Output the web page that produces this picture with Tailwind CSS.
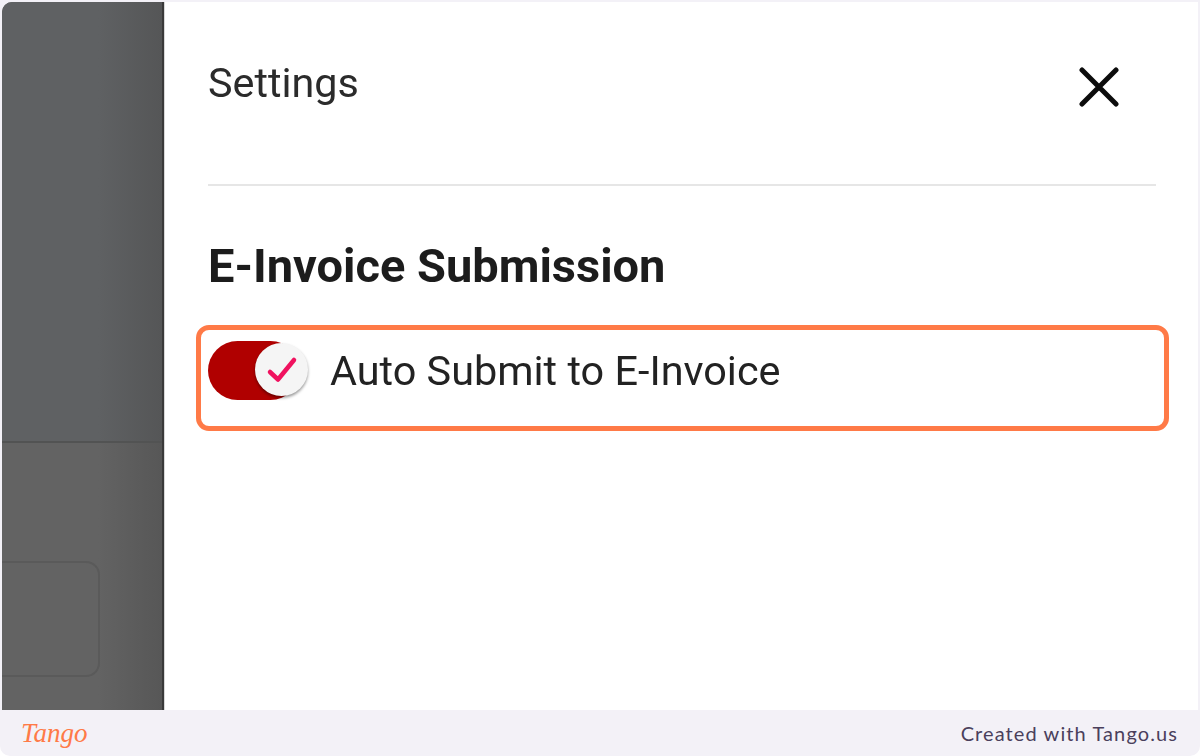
<!DOCTYPE html>
<html lang="en">
<head>
    <meta charset="UTF-8">
    <meta name="viewport" content="width=device-width, initial-scale=1.0">
    <title>Settings</title>
    <script src="https://cdn.jsdelivr.net/npm/@tailwindcss/browser@4"></script>
</head>
<body class="bg-white">
    <div class="w-[1200px] h-[756px] flex flex-col bg-[#f3f1f7] rounded-bl-[10px] rounded-br-[10px] overflow-hidden font-['Roboto',sans-serif]">
        <div class="h-[708px] mt-[2px] mx-[2px] flex bg-white rounded-tl-[10px] overflow-hidden">
            <!-- dimmed page behind the drawer -->
            <div class="w-[162px] shrink-0 flex flex-col border-r-2 border-[#3a3a3a] bg-linear-to-r from-[#636363] from-60% to-[#575757]">
                <div class="h-[441px] shrink-0 border-b-2 border-[#525353] bg-linear-to-r from-[#5f6163] from-60% to-[#555657]"></div>
                <div class="mt-[118px] w-[98px] h-[116px] border-2 border-l-0 border-[#5a5a5a] rounded-r-[14px] blur-[0.5px]"></div>
            </div>

            <!-- settings drawer -->
            <div class="flex-1 flex flex-col pl-[43px] pr-[42px] border-l border-[#d8d8d8]">
                <div class="h-[184px] shrink-0 flex items-center justify-between border-b-2 border-[#e6e6e6] pb-[18px]">
                    <h1 class="text-[41.3px] text-[#2b2b2b] leading-none blur-[0.5px]">Settings</h1>
                    <button class="mr-[37px] mt-[5px]">
                        <svg class="w-[40px] h-[40px] block blur-[0.5px]" viewBox="0 0 40 40" fill="none" stroke="#0c0c0c" stroke-width="5" stroke-linecap="round"><path d="M3 3 L37 37 M37 3 L3 37"/></svg>
                    </button>
                </div>
                <h2 class="mt-[55px] text-[47px] leading-[50px] font-bold text-[#1c1c1c] blur-[0.5px]">E-Invoice Submission</h2>
                <div class="mt-[34px] -ml-[12px] -mr-[13px] h-[106px] border-[5px] border-[#ff7a47] rounded-[13px] flex items-center pl-[7px] pb-[16px]">
                    <div class="relative w-[92px] h-[59px] shrink-0 rounded-full bg-[#b00000] blur-[0.4px]">
                        <div class="absolute left-[47px] top-[2px] w-[53px] h-[53px] rounded-full bg-[#f5f5f5] shadow-[0_2px_3px_rgba(0,0,0,0.4)] flex items-center justify-center">
                            <svg class="w-[32px] h-[32px]" viewBox="0 0 32 32" fill="none" stroke="#f0125f" stroke-width="4.5" stroke-linecap="round" stroke-linejoin="round"><path d="M4 19 L12 26.5 L28 7"/></svg>
                        </div>
                    </div>
                    <span class="ml-[30px] mt-[4px] text-[41.4px] leading-none text-[#222222] blur-[0.5px]">Auto Submit to E-Invoice</span>
                </div>
            </div>
        </div>

        <!-- footer bar -->
        <div class="flex-1 flex items-center justify-between pl-[21px] pr-[22px]">
            <span class="text-[27px] italic text-[#ff7a47] font-['Liberation_Serif',serif]">Tango</span>
            <span class="text-[20px] text-[#4a3f5c] font-['Lato',sans-serif] tracking-[1.1px]">Created with Tango.us</span>
        </div>
    </div>
</body>
</html>
